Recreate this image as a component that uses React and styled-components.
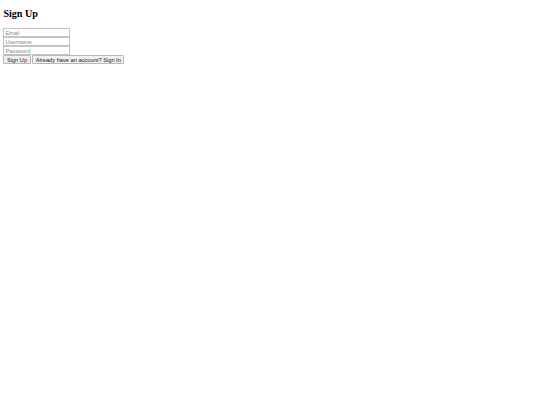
import React from 'react';
import styled, { createGlobalStyle } from 'styled-components';

// the shot is a 1280px wide page shown at 540px, so every default size is scaled by ~0.42
const GlobalStyle = createGlobalStyle`
  body {
    margin: 0;
    padding: 0 3.4px;
    background: #fff;
    font-family: "Liberation Serif", "Times New Roman", serif;
    font-size: 6.75px;
  }
`;

const Title = styled.h2`
  font-size: 10.1px;
  line-height: 11.6px;
  font-weight: bold;
  margin: 8.4px 0;
  color: #000;
`;

const Form = styled.form`
  margin: 0;
`;

const Field = styled.input`
  display: block;
  box-sizing: border-box;
  width: 66.5px;
  height: 8.9px;
  margin: 0;
  padding: 0 1px;
  border: 1px solid #c4c4c4;
  border-radius: 0;
  font: 5.7px "Liberation Sans", Arial, sans-serif;
  color: #000;
  background: #fff;
  outline: none;

  &::placeholder {
    color: #8a8a8a;
  }
`;

const Button = styled.button`
  box-sizing: border-box;
  height: 9px;
  margin: 0;
  padding: 0 2.5px;
  border: 1px solid #b8b8b8;
  border-radius: 1px;
  background: #f0f0f0;
  font: 5.7px "Liberation Sans", Arial, sans-serif;
  color: #1a1a1a;
  vertical-align: top;
`;

export default function App() {
  return (
    <>
      <GlobalStyle />
      <Title>Sign Up</Title>
      <Form onSubmit={e => e.preventDefault()}>
        <Field type="email" placeholder="Email" />
        <Field type="text" placeholder="Username" />
        <Field type="password" placeholder="Password" />
        <Button type="submit">Sign Up</Button> <Button type="button">Already have an account? Sign In</Button>
      </Form>
    </>
  );
}
